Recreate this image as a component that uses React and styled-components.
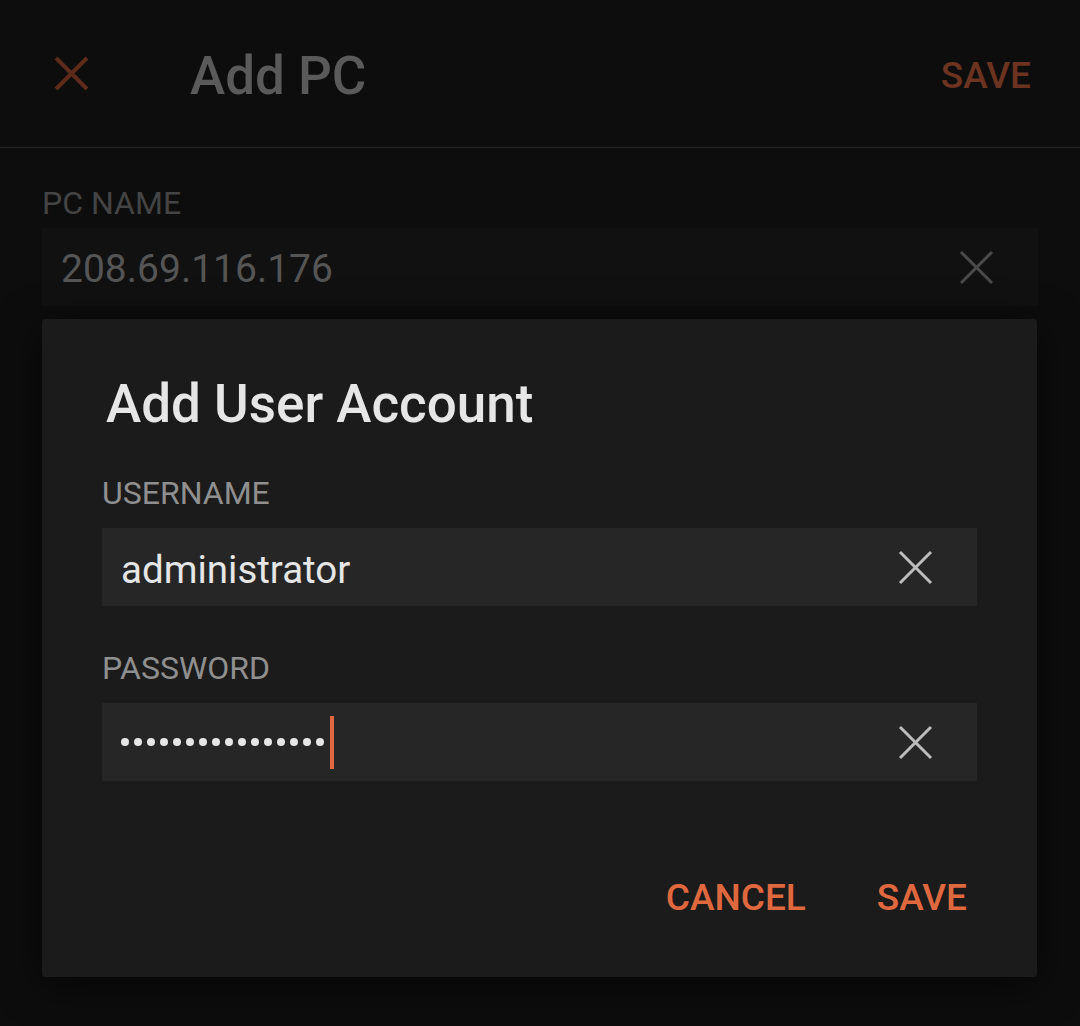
import React from "react";
import styled, { createGlobalStyle } from "styled-components";

const Global = createGlobalStyle`
html, body {
  margin:0;
  padding:0;
  background:#0d0d0d;
}
body {
  font-family: Roboto, "Noto Sans", sans-serif;
}
`;

const Page = styled.div`
position:relative;
width:1080px;
height:1026px;
background:#0d0d0d;
overflow:hidden;
display:flex;
flex-direction:column;
`;

const Header = styled.div`
height:148px;
border-bottom:1px solid #262626;
display:flex;
align-items:center;
padding:4px 49px 0 54px;
box-sizing:border-box;
`;

const CloseBtn = styled.div`
width:35px;
height:35px;
display:flex;
margin-right:101px;
margin-top:-4px;
`;

const Title = styled.div`
flex:1;
font-size:53px;
font-weight:500;
color:#5a5a5a;
`;

const HeaderAction = styled.div`
font-size:37px;
font-weight:500;
color:#6b3320;
`;

const Content = styled.div`
padding:37px 42px 0 42px;
display:flex;
flex-direction:column;
`;

const Label = styled.div`
font-size:32px;
line-height:36px;
color:${(p) => p.color};
margin-bottom:${(p) => p.gap}px;
`;

const Field = styled.div`
height:78px;
box-sizing:border-box;
background:${(p) => p.bg};
display:flex;
align-items:center;
padding:0 44px 0 19px;
`;

const FieldText = styled.div`
flex:1;
font-size:${(p) => p.size || 39}px;
color:${(p) => p.color};
display:flex;
align-items:center;
padding-top:4px;
`;

const Caret = styled.span`
display:inline-block;
width:4px;
height:53px;
background:#e0683f;
margin-left:1px;
margin-top:-4px;
`;

const Dot = styled.span`
display:inline-block;
width:8px;
height:8px;
border-radius:50%;
background:#e6e6e6;
margin-right:5px;
margin-top:-4px;
`;

const Dialog = styled.div`
position:absolute;
top:319px;
left:42px;
width:995px;
height:658px;
background:#1b1b1b;
border-radius:4px;
box-shadow:0 8px 40px rgba(0,0,0,0.6);
box-sizing:border-box;
padding:50px 60px 0 60px;
display:flex;
flex-direction:column;
`;

const DialogTitle = styled.div`
font-size:53px;
font-weight:500;
color:#e6e6e6;
line-height:70px;
margin-left:4px;
margin-bottom:36px;
`;

const FieldGroup = styled.div`
display:flex;
flex-direction:column;
margin-bottom:${(p) => p.gap || 0}px;
`;

const Actions = styled.div`
margin-top:auto;
height:150px;
display:flex;
justify-content:flex-end;
align-items:center;
gap:71px;
padding-right:10px;
padding-bottom:10px;
box-sizing:border-box;
`;

const ActionBtn = styled.div`
font-size:37px;
font-weight:500;
color:#e0683f;
`;

const Cross = ({ color, w = 3 }) => (
  <svg width={35} height={35} viewBox="0 0 35 35">
    <path d="M2 2 L33 33 M33 2 L2 33" stroke={color} strokeWidth={w} />
  </svg>
);

export default function App() {
  return (
    <Page>
      <Global />
      <Header>
        <CloseBtn>
          <Cross color="#5e2a1a" w={4} />
        </CloseBtn>
        <Title>Add PC</Title>
        <HeaderAction>SAVE</HeaderAction>
      </Header>
      <Content>
        <Label color="#444444" gap={7}>PC NAME</Label>
        <Field bg="#111111">
          <FieldText color="#555555">208.69.116.176</FieldText>
          <Cross color="#4a4a4a" />
        </Field>
      </Content>
      <Dialog>
        <DialogTitle>Add User Account</DialogTitle>
        <FieldGroup gap={44}>
          <Label color="#8f8f8f" gap={17}>USERNAME</Label>
          <Field bg="#262626">
            <FieldText color="#e6e6e6" size={38.5}>administrator</FieldText>
            <Cross color="#bdbdbd" />
          </Field>
        </FieldGroup>
        <FieldGroup>
          <Label color="#8f8f8f" gap={17}>PASSWORD</Label>
          <Field bg="#262626">
            <FieldText color="#e6e6e6">
              {Array.from({ length: 16 }).map((_, i) => (
                <Dot key={i} />
              ))}
              <Caret />
            </FieldText>
            <Cross color="#bdbdbd" />
          </Field>
        </FieldGroup>
        <Actions>
          <ActionBtn>CANCEL</ActionBtn>
          <ActionBtn>SAVE</ActionBtn>
        </Actions>
      </Dialog>
    </Page>
  );
}
